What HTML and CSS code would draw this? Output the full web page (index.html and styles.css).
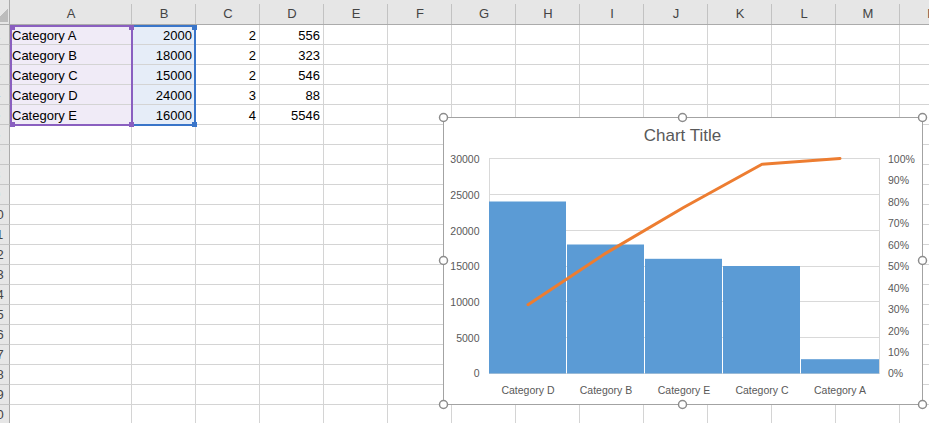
FILE: index.html
```html
<!DOCTYPE html>
<html lang="en">
<head>
  <meta charset="UTF-8">
  <title>Pareto chart</title>
  <link rel="stylesheet" href="styles.css">
</head>
<body>
  <div id="sheet">
    <div id="grid">
      <!-- column headers -->
      <div class="corner"></div>
      <div class="colHead">A</div>
      <div class="colHead">B</div>
      <div class="colHead">C</div>
      <div class="colHead">D</div>
      <div class="colHead">E</div>
      <div class="colHead">F</div>
      <div class="colHead">G</div>
      <div class="colHead">H</div>
      <div class="colHead">I</div>
      <div class="colHead">J</div>
      <div class="colHead">K</div>
      <div class="colHead">L</div>
      <div class="colHead">M</div>
      <div class="colHead">N</div>

      <!-- data rows -->
      <div class="rowHead">1</div>
      <div class="cell selA">Category A</div>
      <div class="cell selB num">2000</div>
      <div class="cell num">2</div>
      <div class="cell num">556</div>
      <div class="cell"></div><div class="cell"></div><div class="cell"></div><div class="cell"></div><div class="cell"></div>
      <div class="cell"></div><div class="cell"></div><div class="cell"></div><div class="cell"></div><div class="cell"></div>

      <div class="rowHead">2</div>
      <div class="cell selA">Category B</div>
      <div class="cell selB num">18000</div>
      <div class="cell num">2</div>
      <div class="cell num">323</div>
      <div class="cell"></div><div class="cell"></div><div class="cell"></div><div class="cell"></div><div class="cell"></div>
      <div class="cell"></div><div class="cell"></div><div class="cell"></div><div class="cell"></div><div class="cell"></div>

      <div class="rowHead">3</div>
      <div class="cell selA">Category C</div>
      <div class="cell selB num">15000</div>
      <div class="cell num">2</div>
      <div class="cell num">546</div>
      <div class="cell"></div><div class="cell"></div><div class="cell"></div><div class="cell"></div><div class="cell"></div>
      <div class="cell"></div><div class="cell"></div><div class="cell"></div><div class="cell"></div><div class="cell"></div>

      <div class="rowHead">4</div>
      <div class="cell selA">Category D</div>
      <div class="cell selB num">24000</div>
      <div class="cell num">3</div>
      <div class="cell num">88</div>
      <div class="cell"></div><div class="cell"></div><div class="cell"></div><div class="cell"></div><div class="cell"></div>
      <div class="cell"></div><div class="cell"></div><div class="cell"></div><div class="cell"></div><div class="cell"></div>

      <div class="rowHead">5</div>
      <div class="cell selA">Category E</div>
      <div class="cell selB num">16000</div>
      <div class="cell num">4</div>
      <div class="cell num">5546</div>
      <div class="cell"></div><div class="cell"></div><div class="cell"></div><div class="cell"></div><div class="cell"></div>
      <div class="cell"></div><div class="cell"></div><div class="cell"></div><div class="cell"></div><div class="cell"></div>
      <!-- empty rows 6..21 are added by script.js -->
    </div>
  </div>

  <!-- range highlight for A1:A5 and B1:B5 -->
  <div class="range rangeB">
    <span class="knob tr"></span><span class="knob br"></span>
  </div>
  <div class="range rangeA">
    <span class="knob tl"></span><span class="knob tr"></span>
    <span class="knob bl"></span><span class="knob br"></span>
  </div>

  <!-- chart object -->
  <div id="chart">
    <svg class="chartSvg" width="480" height="288" viewBox="0 0 480 288">
      <text class="title" x="239.5" y="24" text-anchor="middle">Chart Title</text>

      <g class="gridlines">
        <line x1="46" y1="41.5" x2="437" y2="41.5"/>
        <line x1="46" y1="77.5" x2="437" y2="77.5"/>
        <line x1="46" y1="113.5" x2="437" y2="113.5"/>
        <line x1="46" y1="149.5" x2="437" y2="149.5"/>
        <line x1="46" y1="184.5" x2="437" y2="184.5"/>
        <line x1="46" y1="220.5" x2="437" y2="220.5"/>
        <line x1="46" y1="256.5" x2="437" y2="256.5"/>
        <line x1="46.5" y1="41.5" x2="46.5" y2="256.5"/>
        <line x1="436.5" y1="41.5" x2="436.5" y2="256.5"/>
      </g>

      <g class="bars">
        <rect x="46" y="84.5" width="77" height="172"/>
        <rect x="124" y="127.5" width="77" height="129"/>
        <rect x="202" y="141.8" width="77" height="114.7"/>
        <rect x="280" y="149" width="77" height="107.5"/>
        <rect x="358" y="242.2" width="78" height="14.3"/>
      </g>

      <polyline class="cumLine" points="85,187.7 163,136.1 241,90.2 319,47.2 397,41.5"/>

      <g class="axisLeft">
        <text x="36.5" y="45.5">30000</text>
        <text x="36.5" y="81.5">25000</text>
        <text x="36.5" y="117.5">20000</text>
        <text x="36.5" y="153">15000</text>
        <text x="36.5" y="188.5">10000</text>
        <text x="36.5" y="224.5">5000</text>
        <text x="36.5" y="260">0</text>
      </g>

      <g class="axisRight">
        <text x="445" y="45.5">100%</text>
        <text x="445" y="67">90%</text>
        <text x="445" y="88.5">80%</text>
        <text x="445" y="110">70%</text>
        <text x="445" y="131.5">60%</text>
        <text x="445" y="153">50%</text>
        <text x="445" y="174.5">40%</text>
        <text x="445" y="196">30%</text>
        <text x="445" y="217.5">20%</text>
        <text x="445" y="239">10%</text>
        <text x="445" y="260">0%</text>
      </g>

      <g class="axisBottom">
        <text x="85" y="277">Category D</text>
        <text x="163" y="277">Category B</text>
        <text x="241" y="277">Category E</text>
        <text x="319" y="277">Category C</text>
        <text x="397" y="277">Category A</text>
      </g>

      <!-- selection handles -->
      <g class="handles">
        <circle cx="0.5" cy="0.5" r="4"/>
        <circle cx="239.5" cy="0.5" r="4"/>
        <circle cx="479.5" cy="0.5" r="4"/>
        <circle cx="0.5" cy="143.5" r="4"/>
        <circle cx="479.5" cy="143.5" r="4"/>
        <circle cx="0.5" cy="287.5" r="4"/>
        <circle cx="239.5" cy="287.5" r="4"/>
        <circle cx="479.5" cy="287.5" r="4"/>
      </g>
    </svg>
  </div>

  <script src="script.js"></script>
</body>
</html>
```

FILE: styles.css
```css
/* page */
body {
  margin: 0;
  width: 929px;
  height: 423px;
  overflow: hidden;
  position: relative;
  background-color: #fff;
  font-family: 'Liberation Sans', Arial, sans-serif;
  color: #000;
}
/* sheet is scrolled a little, so the row numbers are cut on the left */
#sheet {
  margin-left: -16px;
}
#grid {
  display: grid;
  grid-template-columns: 26px 122px repeat(13, 64px);
  grid-template-rows: 25px;
  grid-auto-rows: 20px;
}
/* header row */
.corner,
.colHead {
  background-color: #e6e6e6;
  border-bottom: 1px solid #ababab;
  box-sizing: border-box;
}
.corner {
  border-right: 1px solid #ababab;
  background-image: linear-gradient(to bottom right, transparent 50%, #bcbcbc 50%);
  background-size: 14px 14px;
  background-position: right 1px bottom 2px;
  background-repeat: no-repeat;
}
.colHead {
  padding-top: 4px;
  text-align: center;
  font-size: 13px;
  line-height: 20px;
  color: #444;
  background-image: linear-gradient(#c2c2c2, #c2c2c2);
  background-size: 1px 20px;
  background-position: right bottom;
  background-repeat: no-repeat;
}
/* row numbers */
.rowHead {
  background-color: #e6e6e6;
  border-right: 1px solid #ababab;
  border-bottom: 1px solid #c6c6c6;
  box-sizing: border-box;
  text-align: center;
  font-size: 13px;
  line-height: 19px;
  color: #444;
}
/* cells */
.cell {
  box-sizing: border-box;
  border-right: 1px solid #d4d4d4;
  border-bottom: 1px solid #d4d4d4;
  padding: 2px 3px 0 2px;
  font-size: 13px;
  line-height: 17px;
  white-space: nowrap;
  overflow: hidden;
}
.num {
  text-align: right;
}
.selA {
  background-color: #f0ebf7;
}
.selB {
  background-color: #e6edf8;
}
/* range borders */
.range {
  position: absolute;
  top: 25px;
  height: 101px;
  box-sizing: border-box;
  border: 2px solid;
}
.rangeA {
  left: 10px;
  width: 123px;
  border-color: #8a5fc0;
}
.rangeB {
  left: 131px;
  width: 65px;
  border-color: #3a75c9;
}
.knob {
  position: absolute;
  width: 5px;
  height: 5px;
  background-color: inherit;
}
.rangeA .knob { background-color: #8a5fc0; }
.rangeB .knob { background-color: #3a75c9; }
.knob.tl { left: -2px; top: -2px; }
.knob.tr { right: -3px; top: -2px; }
.knob.bl { left: -2px; bottom: -3px; }
.knob.br { right: -3px; bottom: -3px; }
/* chart */
#chart {
  position: absolute;
  left: 443px;
  top: 117px;
  width: 480px;
  height: 288px;
  box-sizing: border-box;
  border: 1px solid #a3a3a3;
  background-color: #fff;
}
.chartSvg {
  position: absolute;
  left: -1px;
  top: -1px;
  overflow: visible;
  font-family: 'Liberation Sans', Arial, sans-serif;
}
.title {
  font-size: 17px;
  fill: #595959;
}
.gridlines line {
  stroke: #d9d9d9;
  stroke-width: 1;
  shape-rendering: crispEdges;
}
.bars rect {
  fill: #5b9bd5;
}
.cumLine {
  fill: none;
  stroke: #ed7d31;
  stroke-width: 3;
  stroke-linejoin: round;
  stroke-linecap: round;
}
.axisLeft text,
.axisRight text,
.axisBottom text {
  font-size: 10.5px;
  fill: #595959;
}
.axisLeft text { text-anchor: end; }
.axisBottom text { text-anchor: middle; }
.handles circle {
  fill: #fff;
  stroke: #8c8c8c;
  stroke-width: 1.5;
}
```

FILE: script.js
```js
// add empty rows 6..21 below the data
const grid = document.getElementById("grid");
for (let r = 6; r <= 21; r++) {
  const head = document.createElement("div");
  head.className = "rowHead";
  head.textContent = r;
  grid.appendChild(head);
  for (let c = 0; c < 14; c++) {
    const cell = document.createElement("div");
    cell.className = "cell";
    grid.appendChild(cell);
  }
}
```
